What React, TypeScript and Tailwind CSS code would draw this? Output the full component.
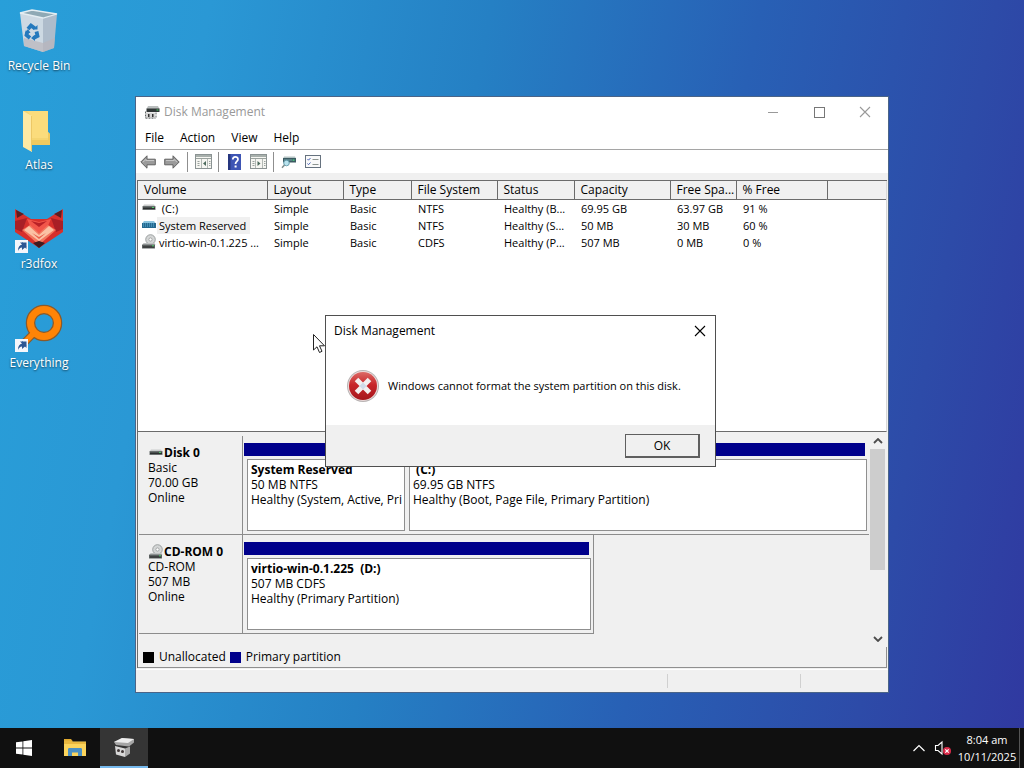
import type { ReactNode } from "react";

/* ---------- desktop icons ---------- */

function ShortcutArrow() {
  return (
    <g>
      <rect x="0" y="35" width="13" height="13" fill="#f4f6fb" />
      <path d="M3 46c0-4 1.500-6 4-6.500V37l4.500 4.200L7 45v-2.500c-2 .1-3 1.200-4 3.500z" fill="#2d5793" />
      <path d="M5 37.500h6.500V44z" fill="#2d5793" />
    </g>
  );
}

function RecycleBinIcon() {
  return (
    <svg viewBox="0 0 48 48" className="size-12" aria-hidden="true">
      <path d="M5 6 17 3 42 7 28 11z" fill="#8fa9b5" />
      <path d="M5 6 28 11 28 45 9 39z" fill="#cdd9e3" />
      <path d="M28 11 42 7 39 41 28 45z" fill="#aebccb" />
      <path d="M9 31 28 36V45L9 39zM28 36 40 31 39 41 28 45z" fill="#b9b5bb" opacity=".7" />
      <path d="M5 6 17 3 42 7 28 11z" fill="none" stroke="#e4edf2" strokeWidth="1.300" />
      <g fill="none" stroke="#2479bd" strokeWidth="3.800">
        <path d="M13 22 16 18.500 20 21.500" />
        <path d="M21.500 24.500 22.500 29 18.500 31" />
        <path d="M15 31 11.500 28 12.500 24" />
      </g>
      <path d="M18 22.500h4.500V18zM20 28v6l-4-3zM10 26l3-4 2.500 4z" fill="#2479bd" />
    </svg>
  );
}

function FolderDesktopIcon() {
  return (
    <svg viewBox="0 0 48 48" className="size-12" aria-hidden="true">
      <path d="M8 5H33V26L35 28V39H14z" fill="#f5d571" />
      <path d="M12 5H33V32H17V11z" fill="#fbdc7c" />
      <path d="M17 34H33V26L35 28V39H17z" fill="#f0c95f" />
      <path d="M8 5 17 10V46L8 41z" fill="#fde9a4" />
      <path d="M16.500 10V45" stroke="#edc866" strokeWidth="1" />
    </svg>
  );
}

function FoxIcon() {
  return (
    <svg viewBox="0 0 48 48" className="size-12" aria-hidden="true">
      <path d="M0 4 16 14H32L48 4V27L24 43 0 27z" fill="#d7302c" />
      <path d="M1 5 9 9 2 13zM47 5 39 9 46 13z" fill="#5c1d22" />
      <path d="M0 16 12 13 7 27 0 24zM48 16 36 13 41 27 48 24z" fill="#a81f26" />
      <path d="M12 14 24 17 36 14 32 23 24 28 16 23z" fill="#f2564a" />
      <path d="M16 16 24 22 32 16 24 18z" fill="#b92127" />
      <path d="M7 25 15 20 24 28 33 20 41 25 24 40z" fill="#f3775f" />
      <path d="M9 25 14 21 24 30 34 21 39 25 24 36z" fill="#fbc2a5" />
      <path d="M17 28 24 32 31 28 24 34z" fill="#e85f4c" />
      <path d="M18 38 24 36 30 38 24 43z" fill="#3d1a20" />
      <ShortcutArrow />
    </svg>
  );
}

function EverythingIcon() {
  return (
    <svg viewBox="0 0 48 48" className="size-12" aria-hidden="true">
      <path d="M20 28 9 39" stroke="#8a5a2b" strokeWidth="8" />
      <circle cx="29" cy="19" r="13.500" fill="none" stroke="#8a5a2b" strokeWidth="9.500" />
      <path d="M21 27 9 39" stroke="#ff8406" strokeWidth="5.500" />
      <circle cx="29" cy="19" r="13.500" fill="none" stroke="#ff8406" strokeWidth="7" />
      <ShortcutArrow />
    </svg>
  );
}

const shortcuts: { label: string; icon: ReactNode }[] = [
  { label: "Recycle Bin", icon: <RecycleBinIcon /> },
  { label: "Atlas", icon: <FolderDesktopIcon /> },
  { label: "r3dfox", icon: <FoxIcon /> },
  { label: "Everything", icon: <EverythingIcon /> },
];

/* ---------- small icons ---------- */

function DriveIcon() {
  return (
    <svg viewBox="0 0 16 16" className="size-4 shrink-0" aria-hidden="true">
      <path d="M3 4.500h10l1 1.500H2z" fill="#c9cccc" />
      <rect x="1.500" y="6" width="13" height="4" rx=".5" fill="#6a7070" />
      <rect x="2" y="7.500" width="12" height="1.500" fill="#2b2f2f" />
      <rect x="11" y="7" width="2" height="1" fill="#4fcf6a" />
    </svg>
  );
}

function SelectedDriveIcon() {
  return (
    <svg viewBox="0 0 16 16" className="size-4 shrink-0" aria-hidden="true">
      <path d="M3 4h10l1.500 2h-13z" fill="#8cc4de" />
      <rect x="1" y="6" width="14" height="5" fill="#23688f" />
      <path d="M2 7h12M2 9h12" stroke="#63b2d8" strokeWidth="1" strokeDasharray="1 1" />
    </svg>
  );
}

function DiscDriveIcon() {
  return (
    <svg viewBox="0 0 16 16" className="size-4 shrink-0" aria-hidden="true">
      <circle cx="9.500" cy="5.500" r="4.800" fill="#d4d6d6" stroke="#8c9090" strokeWidth=".8" />
      <circle cx="9.500" cy="5.500" r="1.600" fill="#fff" stroke="#8c9090" strokeWidth=".7" />
      <path d="M2.500 9h11l1 2h-13z" fill="#bfc2c2" />
      <rect x="1" y="10.500" width="13" height="4" rx=".5" fill="#5b6060" />
      <rect x="2" y="12.500" width="11" height="1" fill="#222" />
      <rect x="11" y="11.300" width="2" height="1" fill="#4fcf6a" />
    </svg>
  );
}

function AppIcon() {
  return (
    <svg viewBox="0 0 16 16" className="size-4 shrink-0" aria-hidden="true">
      <path d="M4 2h10l1.500 3H2.500z" fill="#babebe" />
      <rect x="2.500" y="4.500" width="13" height="3.500" fill="#303636" />
      <rect x="12.500" y="5.500" width="2" height="1" fill="#4fcf6a" />
      <path d="M2 8.500h9V14H2z" fill="#d4d4d4" />
      <path d="M1.500 7.500v6.500M12 8.500V14M1.500 14.200h10" stroke="#606666" strokeWidth="1" strokeDasharray="2 1" />
      <rect x="4" y="10" width="1.500" height="3" fill="#333" />
      <rect x="8" y="10" width="1.500" height="3" fill="#333" />
    </svg>
  );
}

function ArrowIcon({ flip }: { flip?: boolean }) {
  return (
    <svg viewBox="0 0 16 14" className={flip ? "w-4 h-3.5 -scale-x-100" : "w-4 h-3.5"} aria-hidden="true">
      <path d="M.8 7 7 .8V4.200H15.300V9.800H7V13.200z" fill="#9b9b9b" stroke="#626262" strokeWidth="1" />
      <path d="M3 7 6 4.500V5.500H14" fill="none" stroke="#c6c6c6" strokeWidth="1" />
    </svg>
  );
}

function PaneIcon({ play }: { play?: boolean }) {
  return (
    <svg viewBox="0 0 17 15" className="h-[15px] w-[17px]" aria-hidden="true">
      <rect x=".5" y=".5" width="16" height="14" fill="#f6f6f2" stroke="#8b9393" />
      <rect x="1" y="1" width="15" height="2" fill="#a8b0ac" />
      <path d="M1 4.500h15" stroke="#9aa29e" />
      {play ? (
        <>
          <path d="M5.500 5v9M12.500 5v9" stroke="#b4bab6" />
          <path d="M2.500 7.500h2M2.500 9.500h2M2.500 11.500h2M14 7.500h1.500M14 9.500h1.500M14 11.500h1.500" stroke="#9aa29e" />
          <path d="M7.500 7v5l3-2.500z" fill="#4c6a5c" />
        </>
      ) : (
        <>
          <path d="M6.500 5v9M12.500 5v9" stroke="#b4bab6" />
          <path d="M2.500 7.500h2M2.500 9.500h2M2.500 11.500h2M14 7.500h1.500M14 9.500h1.500M14 11.500h1.500" stroke="#9aa29e" />
          <path d="M11 7v5L8 9.500z" fill="#4c6a5c" />
        </>
      )}
    </svg>
  );
}

function HelpIcon() {
  return (
    <svg viewBox="0 0 13 16" className="h-4 w-[13px]" aria-hidden="true">
      <rect width="13" height="16" fill="#3e55b4" />
      <rect width="2.500" height="16" fill="#26367f" />
      <path d="M4.800 5.500C4.800 2 10 2.200 10 5.200 10 7.500 7.500 7.500 7.500 10" fill="none" stroke="#fff" strokeWidth="1.700" />
      <rect x="6.600" y="11.500" width="2" height="2" fill="#fff" />
    </svg>
  );
}

function RescanIcon() {
  return (
    <svg viewBox="0 0 16 14" className="w-4 h-3.5" aria-hidden="true">
      <path d="M3 1.500h11l1 2H2z" fill="#b5c4c4" />
      <rect x="2" y="3" width="13" height="4.500" fill="#3c5b62" />
      <path d="M3 5h8" stroke="#78a4ac" />
      <rect x="11.500" y="4.500" width="2" height="1.200" fill="#54e08b" />
      <circle cx="5.500" cy="8" r="2.800" fill="#b9e3ee" stroke="#5f98a8" strokeWidth=".9" />
      <path d="M3.500 10 1 12.800" stroke="#7c8c8c" strokeWidth="1.500" />
    </svg>
  );
}

function ChecklistIcon() {
  return (
    <svg viewBox="0 0 16 13" className="h-[13px] w-4" aria-hidden="true">
      <rect x=".5" y=".5" width="15" height="12" fill="#fafafa" stroke="#66727f" />
      <path d="m2.500 4 1 1.200L5.500 3M2.500 8.500l1 1.200 2-2.200" fill="none" stroke="#4b64b8" strokeWidth="1" />
      <path d="M7.500 4.500h6M7.500 9.500h6" stroke="#8c9490" />
    </svg>
  );
}

function CloseGlyph() {
  return (
    <svg viewBox="0 0 12 12" className="size-3" aria-hidden="true">
      <path d="m1 1 10 10M11 1 1 11" fill="none" stroke="currentColor" strokeWidth="1.100" />
    </svg>
  );
}

/* ---------- volume list ---------- */

const columns = [
  { name: "Volume", width: "w-[129px]" },
  { name: "Layout", width: "w-[76px]" },
  { name: "Type", width: "w-[68px]" },
  { name: "File System", width: "w-[86px]" },
  { name: "Status", width: "w-[77px]" },
  { name: "Capacity", width: "w-[96px]" },
  { name: "Free Spa...", width: "w-[66px]" },
  { name: "% Free", width: "w-[91px]" },
];

const volumes = [
  { icon: <DriveIcon />, name: "\u00a0(C:)", selected: false, cells: ["Simple", "Basic", "NTFS", "Healthy (B...", "69.95 GB", "63.97 GB", "91 %"] },
  { icon: <SelectedDriveIcon />, name: "System Reserved", selected: true, cells: ["Simple", "Basic", "NTFS", "Healthy (S...", "50 MB", "30 MB", "60 %"] },
  { icon: <DiscDriveIcon />, name: "virtio-win-0.1.225 ...", selected: false, cells: ["Simple", "Basic", "CDFS", "Healthy (P...", "507 MB", "0 MB", "0 %"] },
];

function VolumeTable() {
  return (
    <table className="w-full table-fixed border-collapse text-left leading-[17px]">
      <thead>
        <tr className="h-[18px] bg-[#f0f0f0]">
          {columns.map((c) => (
            <th
              key={c.name}
              className={`${c.width} border-r border-b border-[#6b6b6b] p-0 pl-1.5 font-normal whitespace-nowrap`}
            >
              {c.name}
            </th>
          ))}
          <td className="border-b border-[#6b6b6b]" />
        </tr>
      </thead>
      <tbody className="text-[11px] leading-[17px]">
        {volumes.map((v) => (
          <tr key={v.name} className="h-[17px]">
            <td className="p-0 pl-[3px]">
              <span className="flex h-[17px] items-center">
                {v.icon}
                <span className={v.selected ? "bg-[#f0f0f0] pr-1 pl-0.5 whitespace-nowrap" : "pl-0.5 whitespace-nowrap"}>{v.name}</span>
              </span>
            </td>
            {v.cells.map((cell, i) => (
              <td key={i} className="p-0 pl-[7px] whitespace-nowrap">
                {cell}
              </td>
            ))}
            <td />
          </tr>
        ))}
      </tbody>
    </table>
  );
}

/* ---------- graphical view ---------- */

function DiskHeader({ icon, name, lines }: { icon: ReactNode; name: string; lines: string[] }) {
  return (
    <div className="w-[104px] shrink-0 border-r border-[#8c8c8c] pt-[9px] pl-[9px]">
      <h2 className="flex h-[15px] items-center font-bold whitespace-nowrap">
        {icon}
        {name}
      </h2>
      {lines.map((l) => (
        <p key={l}>{l}</p>
      ))}
    </div>
  );
}

function Partition({ name, size, status, className }: { name: string; size: string; status: string; className: string }) {
  return (
    <div className={`flex flex-col pt-[7px] ${className}`}>
      <div className="mr-0.5 h-[13px] bg-[#00008b]" />
      <div className="mt-[3px] ml-[3px] h-[72px] overflow-hidden border border-[#8f8f8f] bg-white pt-0.5 pl-[3px] whitespace-nowrap">
        <h3 className="font-bold whitespace-pre">{name}</h3>
        <p>{size}</p>
        <p>{status}</p>
      </div>
    </div>
  );
}

function Chevron({ down }: { down?: boolean }) {
  return (
    <svg viewBox="0 0 10 6" className="h-1.5 w-2.5" aria-hidden="true">
      <path d={down ? "m1 1 4 4 4-4" : "m1 5 4-4 4 4"} fill="none" stroke="#4c4c4c" strokeWidth="1.800" />
    </svg>
  );
}

function GraphView() {
  return (
    <div className="flex h-[214px] bg-[#f0f0f0] px-px">
      <div className="min-w-0 flex-1 pt-[3px] leading-[15px]">
        <section className="flex h-[99px] border-b border-[#8c8c8c]">
          <DiskHeader icon={<DriveIcon />} name="Disk 0" lines={["Basic", "70.00 GB", "Online"]} />
          <div className="flex min-w-0 flex-1 gap-px pr-0.5 pl-px">
            <Partition name="System Reserved" size="50 MB NTFS" status="Healthy (System, Active, Pri" className="w-[161px] shrink-0" />
            <Partition name=" (C:)" size="69.95 GB NTFS" status="Healthy (Boot, Page File, Primary Partition)" className="min-w-0 flex-1" />
          </div>
        </section>
        <section className="flex h-[99px]">
          <div className="flex border-b border-[#8c8c8c]">
            <DiskHeader icon={<DiscDriveIcon />} name="CD-ROM 0" lines={["CD-ROM", "507 MB", "Online"]} />
            <div className="border-r border-[#8c8c8c] pr-0.5 pl-px">
              <Partition name="virtio-win-0.1.225  (D:)" size="507 MB CDFS" status="Healthy (Primary Partition)" className="w-[347px]" />
            </div>
          </div>
        </section>
      </div>
      <div className="flex w-[17px] flex-col items-center">
        <button type="button" aria-label="Scroll up" className="grid h-4 w-full place-items-center">
          <Chevron />
        </button>
        <div className="w-[15px] flex-1">
          <div className="h-[121px] bg-[#cdcdcd]" />
        </div>
        <button type="button" aria-label="Scroll down" className="grid h-4 w-full place-items-center">
          <Chevron down />
        </button>
      </div>
    </div>
  );
}

/* ---------- windows ---------- */

function ToolButton({ label, children }: { label: string; children: ReactNode }) {
  return (
    <button type="button" aria-label={label} className="grid h-5 w-6 place-items-center">
      {children}
    </button>
  );
}

function Divider() {
  return <span className="mx-[3px] h-5 w-px bg-[#8f8f8f]" />;
}

function DiskManagementWindow() {
  return (
    <section
      aria-label="Disk Management"
      className="absolute top-[96px] right-[135px] bottom-[35px] left-[135px] flex flex-col border border-[#4a6488] bg-[#f0f0f0]"
    >
      <header className="flex h-[30px] shrink-0 items-center bg-white pl-2 text-[#999]">
        <AppIcon />
        <h1 className="flex-1 pl-1">Disk Management</h1>
        <button type="button" aria-label="Minimize" className="grid h-full w-[46px] place-items-center">
          <span className="h-px w-2.5 bg-[#999]" />
        </button>
        <button type="button" aria-label="Maximize" className="grid h-full w-[46px] place-items-center">
          <span className="size-[11px] border border-[#777]" />
        </button>
        <button type="button" aria-label="Close" className="grid h-full w-[46px] place-items-center">
          <CloseGlyph />
        </button>
      </header>
      <nav className="flex h-[23px] shrink-0 items-center gap-4 border-b border-[#a5a5a5] bg-white pl-[9px]">
        <button type="button">File</button>
        <button type="button">Action</button>
        <button type="button">View</button>
        <button type="button">Help</button>
      </nav>
      <div className="flex h-[23px] shrink-0 items-center bg-white">
        <ToolButton label="Back">
          <ArrowIcon />
        </ToolButton>
        <ToolButton label="Forward">
          <ArrowIcon flip />
        </ToolButton>
        <Divider />
        <ToolButton label="Show console tree">
          <PaneIcon />
        </ToolButton>
        <Divider />
        <ToolButton label="Help">
          <HelpIcon />
        </ToolButton>
        <ToolButton label="Show action pane">
          <PaneIcon play />
        </ToolButton>
        <Divider />
        <ToolButton label="Rescan disks">
          <RescanIcon />
        </ToolButton>
        <ToolButton label="Properties">
          <ChecklistIcon />
        </ToolButton>
      </div>
      <div className="mt-[7px] mr-px ml-px flex min-h-0 flex-1 flex-col border-t border-l border-[#6b6b6b]">
        <div className="min-h-0 flex-1 overflow-hidden border-r border-b border-r-[#d8d8d8] border-b-[#6b6b6b] bg-white">
          <VolumeTable />
        </div>
        <div className="h-px" />
        <GraphView />
        <div className="flex h-[21px] shrink-0 items-center border-r border-b border-[#8f8f8f] pl-[5px]">
          <span className="size-[11px] bg-black" />
          <span className="pl-[5px]">Unallocated</span>
          <span className="ml-1 size-[11px] bg-[#00008b]" />
          <span className="pl-[5px]">Primary partition</span>
        </div>
      </div>
      <footer className="mt-px flex h-[23px] shrink-0 justify-end border-t border-white">
        <span className="my-1 w-[133px] border-l border-[#d0d0d0]" />
        <span className="my-1 w-[88px] border-l border-[#d0d0d0]" />
      </footer>
    </section>
  );
}

function ErrorDialog() {
  return (
    <div
      role="alertdialog"
      aria-label="Disk Management"
      className="absolute top-[315px] left-[325px] flex w-[391px] flex-col border border-[#4f4f4f] bg-white"
    >
      <div className="flex h-[30px] items-center justify-between pl-2">
        <h2>Disk Management</h2>
        <button type="button" aria-label="Close" className="grid h-full w-[30px] place-items-center">
          <CloseGlyph />
        </button>
      </div>
      <div className="flex h-[79px] items-center gap-2 pl-5">
        <svg viewBox="0 0 34 34" className="size-[34px]" aria-hidden="true">
          <defs>
            <linearGradient id="error-red" x1="0" y1="0" x2="0" y2="1">
              <stop offset="0" stopColor="#dc6a66" />
              <stop offset=".45" stopColor="#c8262a" />
              <stop offset="1" stopColor="#a5161c" />
            </linearGradient>
          </defs>
          <circle cx="17" cy="17" r="16" fill="#b9b4b4" />
          <circle cx="17" cy="17" r="15" fill="#eddada" />
          <circle cx="17" cy="17" r="14" fill="url(#error-red)" />
          <path d="m10.500 10.500 13 13m0-13-13 13" stroke="#f3efef" strokeWidth="5" />
          <path d="m17 13.500 3.500 3.500-3.500 3.500-3.500-3.500z" fill="#cfdbe8" />
        </svg>
        <p className="text-[11px]">Windows cannot format the system partition on this disk.</p>
      </div>
      <div className="flex h-[41px] justify-end bg-[#f0f0f0] pt-[9px] pr-[15px]">
        <button
          type="button"
          className="h-6 w-[75px] border border-r-2 border-b-2 border-[#5f5f5f] bg-[#f0f0f0] leading-4"
        >
          OK
        </button>
      </div>
    </div>
  );
}

/* ---------- taskbar ---------- */

function Taskbar() {
  return (
    <footer className="flex h-10 shrink-0 items-stretch bg-[#101010] text-white">
      <button type="button" aria-label="Start" className="grid w-12 place-items-center">
        <svg viewBox="0 0 16 16" className="size-4" aria-hidden="true">
          <path d="M0 2.300 6.500 1.400V7.600H0zM7.300 1.300 16 0V7.600H7.300zM0 8.400H6.500V14.600L0 13.700zM7.300 8.400H16V16L7.300 14.700z" fill="#fff" />
        </svg>
      </button>
      <button type="button" aria-label="File Explorer" className="ml-0.5 grid w-[50px] place-items-center">
        <svg viewBox="0 0 22 18" className="h-[18px] w-[22px]" aria-hidden="true">
          <path d="M0 0h7l2 2.500H0z" fill="#e0a92e" />
          <path d="M0 2.500h22V17H0z" fill="#fbd45c" />
          <path d="M0 1.500h7l1.500 1.500H22V5H0z" fill="#e9b840" />
          <path d="M4 17V10.500C4 9.500 4.500 9 5.500 9h11c1 0 1.500.5 1.500 1.500V17h-4v-3.500H8V17z" fill="#4a90c4" />
        </svg>
      </button>
      <button type="button" aria-label="Disk Management" className="grid w-12 place-items-center border-b-2 border-[#76b9ed] bg-[#353535]">
        <svg viewBox="0 0 24 22" className="h-[22px] w-6" aria-hidden="true">
          <path d="M2 6 10 2 22 3V6.500L17 10.500 4 9z" fill="#a5a5a5" />
          <path d="M2 6 10 2 22 3 16 7z" fill="#ececec" />
          <path d="M3 10 13 12.500V21L4 18.500z" fill="#d8d8d8" />
          <path d="M13 12.500 18 10.500V17.500L13 21z" fill="#a9a9a9" />
          <circle cx="6.500" cy="14.500" r="1.500" fill="#403838" />
          <circle cx="10.500" cy="15.500" r="1.500" fill="#403838" />
        </svg>
      </button>
      <div className="flex-1" />
      <button type="button" aria-label="Show hidden icons" className="grid w-6 place-items-center">
        <svg viewBox="0 0 12 8" className="h-2 w-3" aria-hidden="true">
          <path d="m.5 7 5.500-5.500L11.500 7" fill="none" stroke="#fff" strokeWidth="1.200" />
        </svg>
      </button>
      <button type="button" aria-label="Volume" className="grid w-6 place-items-center">
        <svg viewBox="0 0 18 16" className="h-4 w-[18px]" aria-hidden="true">
          <path d="M1.500 5.500H4L8 2v12L4 10.500H1.500z" fill="none" stroke="#fff" strokeWidth="1.100" />
          <circle cx="13" cy="11" r="4" fill="#d92a48" />
          <path d="m11.300 9.300 3.400 3.400m0-3.400-3.400 3.400" stroke="#fff" strokeWidth="1.200" />
        </svg>
      </button>
      <button type="button" className="w-16 text-center text-[11px] leading-[17px] whitespace-nowrap">
        <time className="block">8:04 am</time>
        <time className="block">10/11/2025</time>
      </button>
      <button type="button" aria-label="Show desktop" className="w-[5px] border-l border-[#555]" />
    </footer>
  );
}

export default function App() {
  return (
    <div className="flex min-h-screen flex-col bg-[linear-gradient(101deg,#289fd9_0%,#2a98d5_18%,#2580c4_42%,#2860b5_65%,#2d4ba8_85%,#3038a0_100%)] font-['Open_Sans','Noto_Sans',sans-serif] text-[12px] leading-4 text-black">
      <main className="relative flex-1">
        <ul className="w-[78px] pt-[7px] text-white">
          {shortcuts.map((s) => (
            <li key={s.label} className="h-[99px]">
              <a href="#" className="flex flex-col items-center gap-[3px] whitespace-nowrap [text-shadow:0_1px_2px_#0009]">
                {s.icon}
                {s.label}
              </a>
            </li>
          ))}
        </ul>
        <DiskManagementWindow />
        <svg viewBox="0 0 14 20" className="absolute top-[334px] left-[313px] h-5 w-3.5" aria-hidden="true">
          <path d="M.5.5V16L4 12.800 6.500 18.500 9 17.300 6.500 11.800H11.500z" fill="#fff" stroke="#222" strokeWidth="1" />
        </svg>
        <ErrorDialog />
      </main>
      <Taskbar />
    </div>
  );
}
